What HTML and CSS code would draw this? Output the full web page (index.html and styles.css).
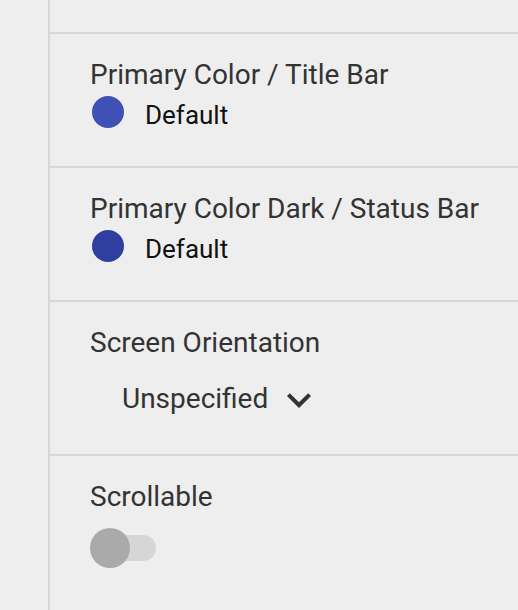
FILE: index.html
```html
<!DOCTYPE html>
<html>
<head>
<meta charset="utf-8">
<link rel="stylesheet" href="styles.css">
</head>
<body>
<div class="layout">
  <div class="gutter"></div>
  <div class="panel">
    <div class="section section-top"></div>
    <div class="section">
      <div class="label">Primary Color / Title Bar</div>
      <div class="color-row">
        <span class="swatch swatch-primary"></span>
        <span class="value">Default</span>
      </div>
    </div>
    <div class="section">
      <div class="label">Primary Color Dark / Status Bar</div>
      <div class="color-row">
        <span class="swatch swatch-dark"></span>
        <span class="value">Default</span>
      </div>
    </div>
    <div class="section section-tall">
      <div class="label">Screen Orientation</div>
      <div class="dropdown">
        <span class="dropdown-text">Unspecified</span>
        <svg class="chevron" width="48" height="48" viewBox="0 0 24 24"><path d="M16.59 8.59L12 13.17 7.41 8.59 6 10l6 6 6-6z" fill="#333333"/></svg>
      </div>
    </div>
    <div class="section section-last">
      <div class="label">Scrollable</div>
      <div class="switch">
        <span class="track"></span>
        <span class="thumb"></span>
      </div>
    </div>
  </div>
</div>
</body>
</html>
```
FILE: styles.css
```css
html, body {
  margin: 0;
  padding: 0;
  background: #eeeeee;
  font-family: Roboto, "Liberation Sans", sans-serif;
}
.layout {
  display: flex;
  width: 518px;
  height: 610px;
  overflow: hidden;
}
.gutter {
  width: 48px;
  flex: none;
  border-right: 2px solid #d7d7d7;
}
.panel {
  flex: 1;
  display: flex;
  flex-direction: column;
}
.section {
  border-bottom: 2px solid #d7d7d7;
  padding: 25px 0 0 40px;
  height: 107px;
}
.section-top {
  height: 32px;
  padding: 0;
}
.section-tall {
  height: 127px;
}
.section-last {
  border-bottom: none;
  flex: 1;
}
.label {
  font-size: 28px;
  line-height: 32px;
  height: 32px;
  color: #333333;
  white-space: nowrap;
}
.color-row {
  display: flex;
  align-items: flex-start;
  margin-top: 5px;
}
.swatch {
  width: 32px;
  height: 32px;
  border-radius: 50%;
  margin-left: 2px;
  flex: none;
}
.swatch-primary { background: #3f51b5; }
.swatch-dark { background: #303f9f; }
.value {
  margin-left: 21px;
  font-size: 26px;
  line-height: 38px;
  color: #111111;
}
.dropdown {
  display: flex;
  align-items: center;
  margin-top: 17px;
  padding-left: 32px;
  height: 48px;
}
.dropdown-text {
  font-size: 28px;
  line-height: 32px;
  color: #333333;
  margin-bottom: 2px;
}
.chevron {
  margin-left: 7px;
  flex: none;
}
.switch {
  position: relative;
  margin-top: 15px;
  width: 66px;
  height: 40px;
}
.track {
  position: absolute;
  left: 6px;
  top: 7px;
  width: 60px;
  height: 26px;
  border-radius: 13px;
  background: #d6d6d6;
}
.thumb {
  position: absolute;
  left: 0;
  top: 0;
  width: 40px;
  height: 40px;
  border-radius: 50%;
  background: #aaaaaa;
}
```
